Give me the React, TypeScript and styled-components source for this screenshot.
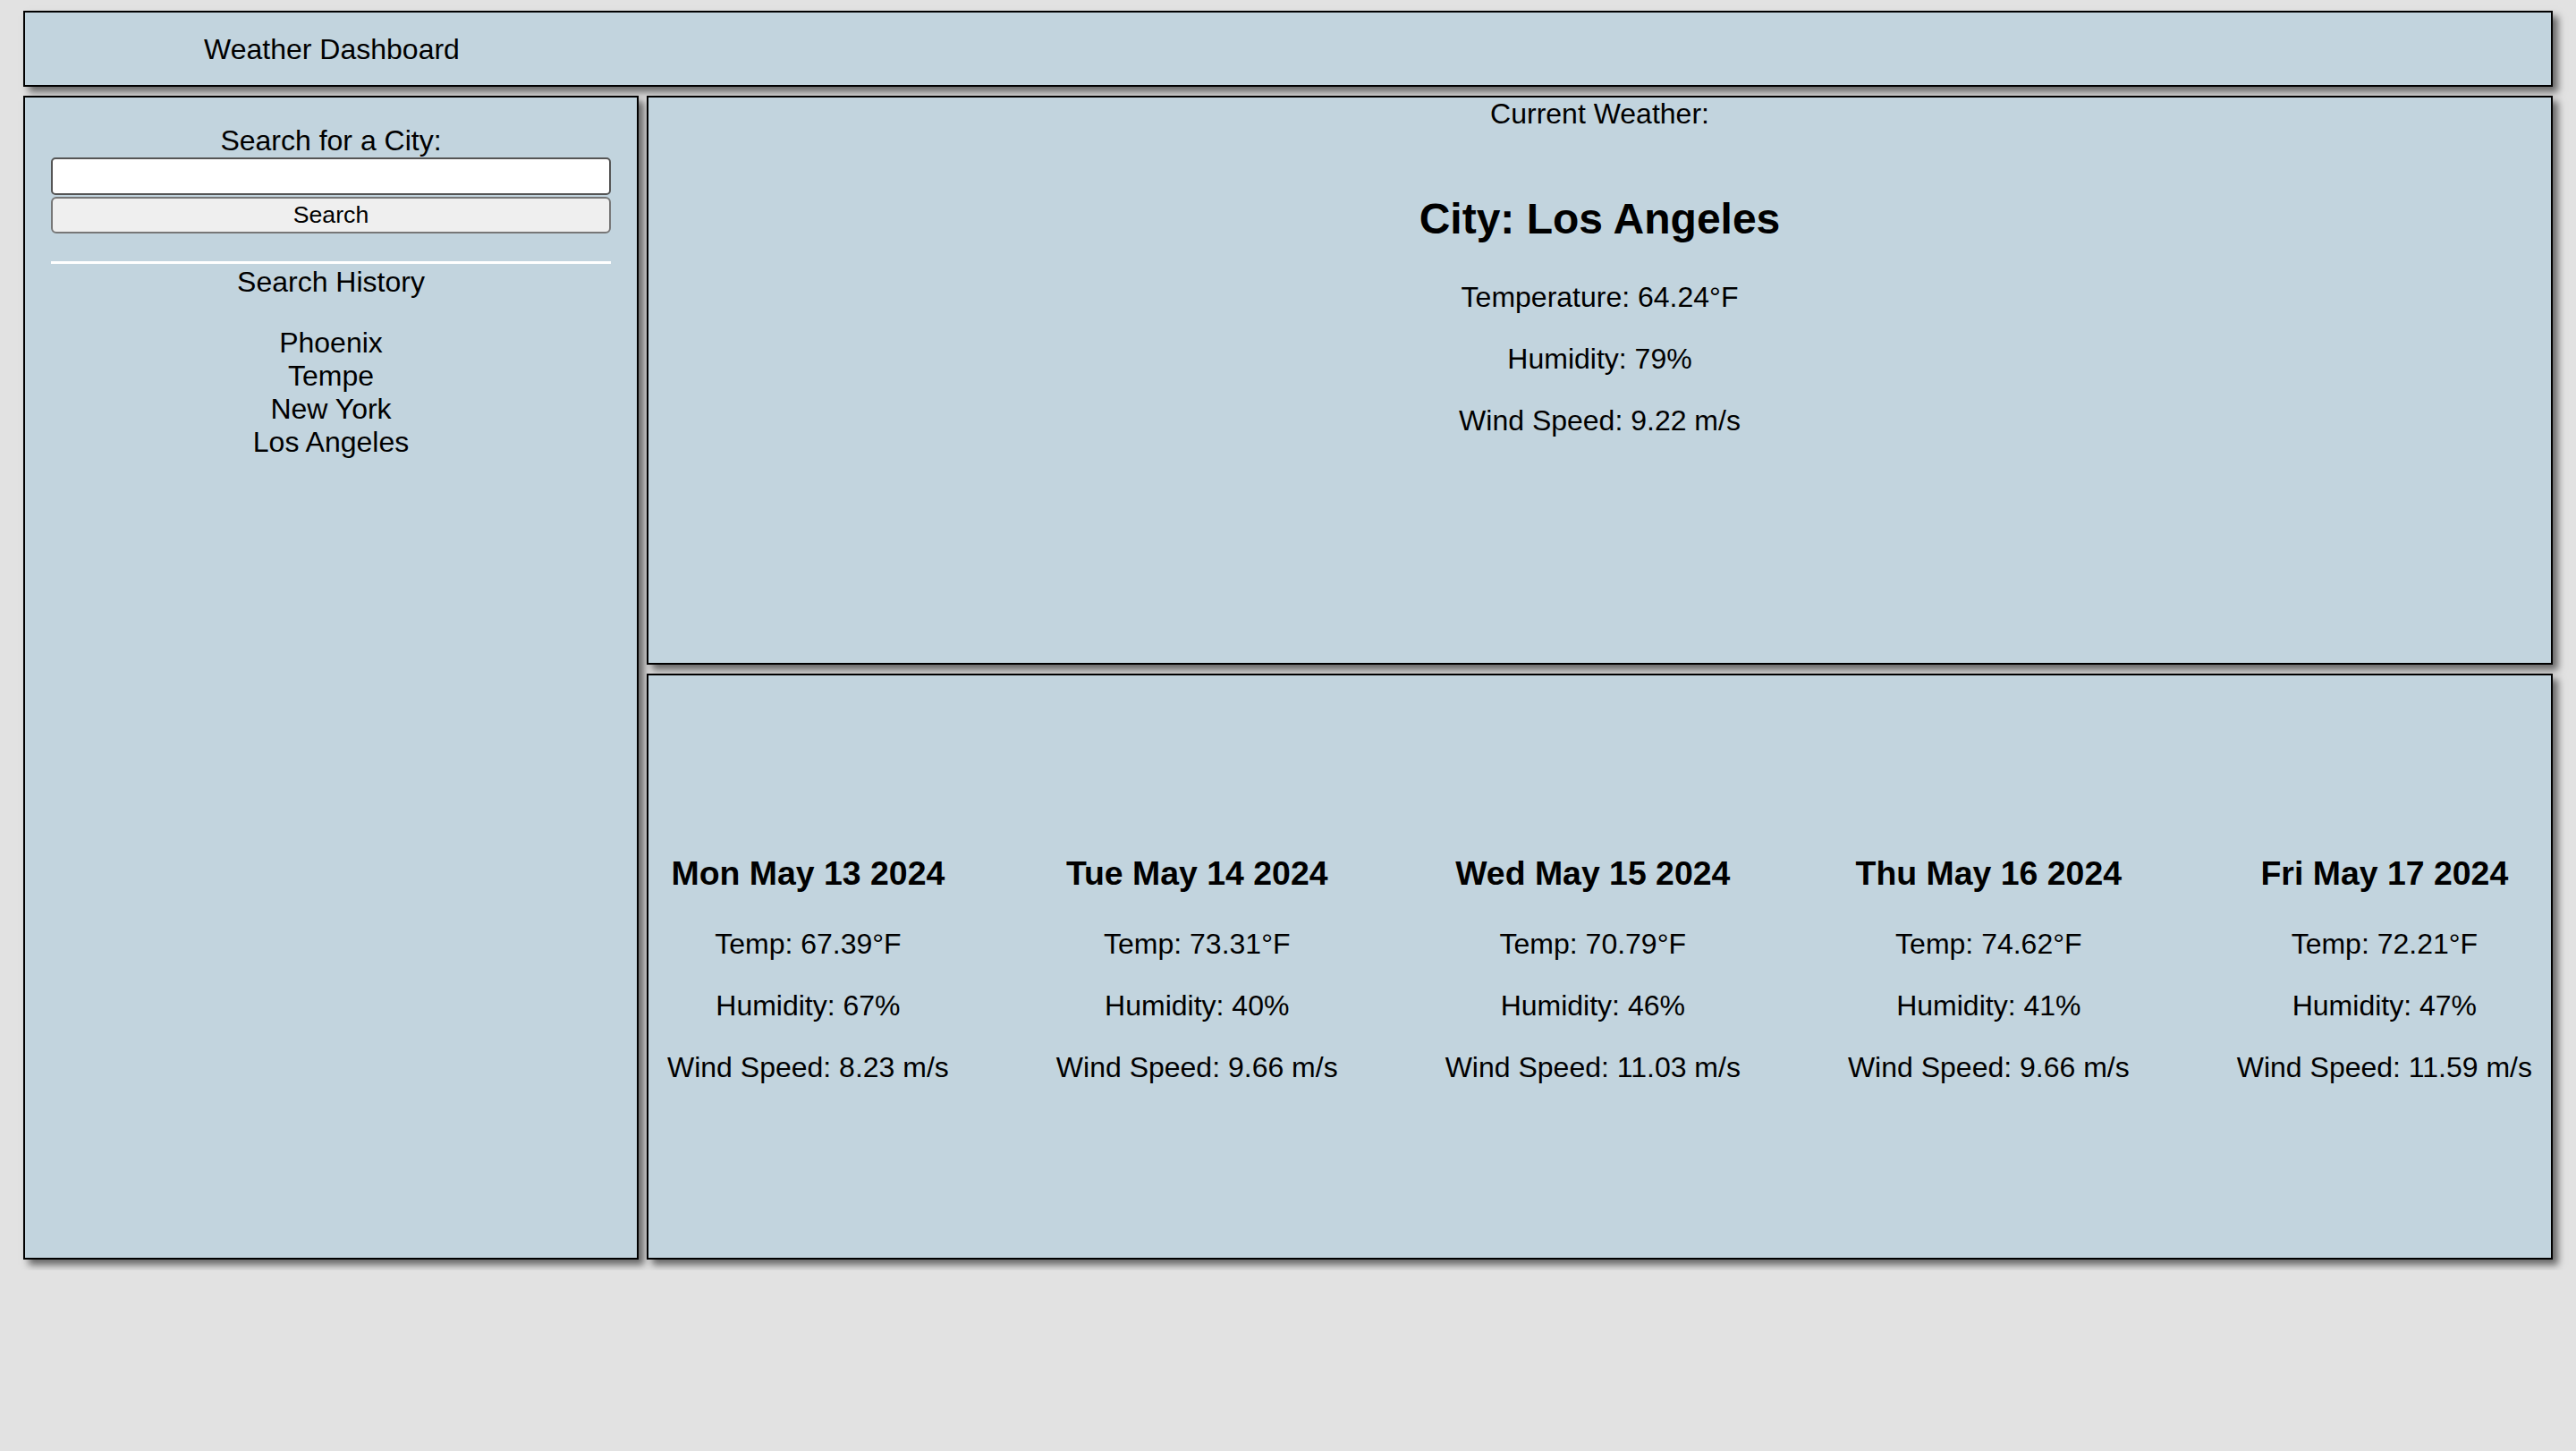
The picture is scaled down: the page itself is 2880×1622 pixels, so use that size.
import React from "react";
import styled, { createGlobalStyle } from "styled-components";

const GlobalStyle = createGlobalStyle`
  html, body {
    margin: 0;
    padding: 0;
    background: #e2e2e2;
  }
  body {
    font-family: "Liberation Sans", Arial, Helvetica, sans-serif;
    color: #000;
  }
  * { box-sizing: border-box; }
`;

const Page = styled.div`
  display: flex;
  flex-direction: column;
  gap: 10px;
  padding: 12px 26px;
  width: 2880px;
`;

const Panel = styled.section<{ $h?: number }>`
  background: #c2d4de;
  border: 2px solid #000;
  box-shadow: 6px 6px 8px rgba(0, 0, 0, 0.55);
  height: ${(p) => (p.$h ? `${p.$h}px` : "auto")};
`;

const Header = styled(Panel)`
  display: grid;
  grid-template-columns: 686px 1fr;
  align-items: center;
  padding-top: 2px;
`;

const Title = styled.div`
  font-size: 32px;
  text-align: center;
`;

const Body = styled.div`
  display: grid;
  grid-template-columns: 688px 1fr;
  gap: 9px;
`;

const Sidebar = styled(Panel)`
  padding: 30px 29px 28px;
  text-align: center;
  font-size: 32px;
`;

const Label = styled.div`
  font-size: 32px;
  text-align: center;
`;

const CityInput = styled.input`
  display: block;
  width: 100%;
  height: 42px;
  margin: 0;
  border: 2px solid #555;
  border-radius: 5px;
  background: #fff;
  font-size: 26px;
  font-family: inherit;
`;

const SearchButton = styled.button`
  display: block;
  width: 100%;
  height: 41px;
  margin: 2px 0 0;
  padding: 0;
  background: #efefef;
  border: 2px solid #777;
  border-radius: 6px;
  font-family: "Liberation Sans", Arial, Helvetica, sans-serif;
  font-size: 26.67px;
  color: #000;
`;

const Divider = styled.hr`
  margin: 31px 0 2px;
  border: none;
  border-top: 3px solid #fff;
`;

const HistoryList = styled.ul`
  list-style: none;
  margin: 31px 0 0;
  padding: 0;
`;

const HistoryItem = styled.li`
  font-size: 32px;
`;

const Main = styled.div`
  display: flex;
  flex-direction: column;
  gap: 10px;
`;

const Current = styled(Panel)`
  text-align: center;
`;

const CityName = styled.h2`
  font-size: 48px;
  font-weight: bold;
  margin: 71px 0 42px;
`;

const Stat = styled.p`
  font-size: 32px;
  margin: 32px 0;
`;

const Forecast = styled(Panel)`
  display: flex;
  align-items: center;
  justify-content: space-between;
  padding: 0 21px;
`;

const DayCard = styled.div`
  text-align: center;
  white-space: nowrap;
`;

const DayTitle = styled.h3`
  font-size: 37.44px;
  font-weight: bold;
  margin: 37.44px 0 39px;
`;

const history = ["Phoenix", "Tempe", "New York", "Los Angeles"];

const days = [
  { date: "Mon May 13 2024", temp: "67.39", hum: "67", wind: "8.23" },
  { date: "Tue May 14 2024", temp: "73.31", hum: "40", wind: "9.66" },
  { date: "Wed May 15 2024", temp: "70.79", hum: "46", wind: "11.03" },
  { date: "Thu May 16 2024", temp: "74.62", hum: "41", wind: "9.66" },
  { date: "Fri May 17 2024", temp: "72.21", hum: "47", wind: "11.59" },
];

export default function App() {
  return (
    <>
      <GlobalStyle />
      <Page>
        <Header $h={85}>
          <Title>Weather Dashboard</Title>
        </Header>
        <Body>
          <Sidebar $h={1301}>
            <Label>Search for a City:</Label>
            <CityInput type="text" />
            <SearchButton>Search</SearchButton>
            <Divider />
            <Label>Search History</Label>
            <HistoryList>
              {history.map((c) => (
                <HistoryItem key={c}>{c}</HistoryItem>
              ))}
            </HistoryList>
          </Sidebar>
          <Main>
            <Current $h={636}>
              <Label>Current Weather:</Label>
              <CityName>City: Los Angeles</CityName>
              <Stat>Temperature: 64.24°F</Stat>
              <Stat>Humidity: 79%</Stat>
              <Stat>Wind Speed: 9.22 m/s</Stat>
            </Current>
            <Forecast $h={655}>
              {days.map((d) => (
                <DayCard key={d.date}>
                  <DayTitle>{d.date}</DayTitle>
                  <Stat>Temp: {d.temp}°F</Stat>
                  <Stat>Humidity: {d.hum}%</Stat>
                  <Stat>Wind Speed: {d.wind} m/s</Stat>
                </DayCard>
              ))}
            </Forecast>
          </Main>
        </Body>
      </Page>
    </>
  );
}
